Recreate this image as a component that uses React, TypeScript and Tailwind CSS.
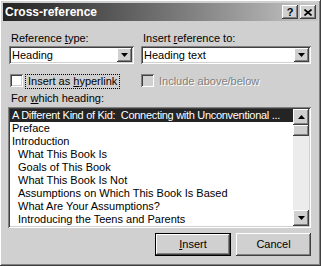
import React from 'react';

const raised =
  'shadow-[inset_-1px_-1px_#404040,inset_1px_1px_#ffffff,inset_-2px_-2px_#808080,inset_2px_2px_#d0d0d0]';
const sunken =
  'shadow-[inset_1px_1px_#808080,inset_-1px_-1px_#ffffff,inset_2px_2px_#404040,inset_-2px_-2px_#d0d0d0]';

const DownArrow = () => (
  <svg width="7" height="4" viewBox="0 0 7 4">
    <path d="M0 0h7L3.5 4z" fill="#000" />
  </svg>
);

const UpArrow = () => (
  <svg width="7" height="4" viewBox="0 0 7 4">
    <path d="M0 4h7L3.5 0z" fill="#000" />
  </svg>
);

const Combo = ({ value, width }: { value: string; width: string }) => (
  <div className={`${width} h-[18px] bg-white ${sunken} flex items-center pl-[3px] pr-[2px]`}>
    <span className="flex-1 leading-[13px]">{value}</span>
    <div className={`w-[15px] h-[14px] bg-[#d0d0d0] ${raised} flex items-center justify-center`}>
      <DownArrow />
    </div>
  </div>
);

const headings: { text: string; level: number }[] = [
  { text: 'A Different Kind of Kid:  Connecting with Unconventional ...', level: 0 },
  { text: 'Preface', level: 0 },
  { text: 'Introduction', level: 0 },
  { text: 'What This Book Is', level: 1 },
  { text: 'Goals of This Book', level: 1 },
  { text: 'What This Book Is Not', level: 1 },
  { text: 'Assumptions on Which This Book Is Based', level: 1 },
  { text: 'What Are Your Assumptions?', level: 1 },
  { text: 'Introducing the Teens and Parents', level: 1 },
];

export default function App() {
  return (
    <div
      className={`w-[321px] h-[266px] bg-[#d0d0d0] p-[3px] flex flex-col text-[11px] text-black ${raised}`}
      style={{ fontFamily: '"Liberation Sans", Arial, sans-serif' }}
    >
      {/* title bar */}
      <div className="h-[18px] bg-gradient-to-r from-[#242424] to-[#c8c8c8] flex items-center pl-[2px] pr-[2px]">
        <span className="flex-1 text-white font-bold text-[12px] leading-[14px]">Cross-reference</span>
        <div className="flex gap-[2px]">
          <div className={`w-[16px] h-[14px] bg-[#d0d0d0] ${raised} flex items-center justify-center font-bold text-[11px] leading-none`}>
            ?
          </div>
          <div className={`w-[16px] h-[14px] bg-[#d0d0d0] ${raised} flex items-center justify-center`}>
            <svg width="8" height="7" viewBox="0 0 8 7">
              <path d="M0.5 0.5l7 6M7.5 0.5l-7 6" stroke="#000" strokeWidth="1.6" />
            </svg>
          </div>
        </div>
      </div>

      <div className="flex-1 flex flex-col pl-[6px] pr-[7px]">
        {/* combos */}
        <div className="flex gap-[7px] mt-[11px]">
          <div className="flex flex-col w-[125px]">
            <span className="leading-[13px] pl-[2px]">
              Reference <span className="underline">t</span>ype:
            </span>
            <div className="mt-[1px]">
              <Combo value="Heading" width="w-[125px]" />
            </div>
          </div>
          <div className="flex flex-col flex-1">
            <span className="leading-[13px] pl-[2px]">
              Insert <span className="underline">r</span>eference to:
            </span>
            <div className="mt-[1px]">
              <Combo value="Heading text" width="w-full" />
            </div>
          </div>
        </div>

        {/* checkboxes */}
        <div className="flex gap-[7px] mt-[10px] h-[15px]">
          <div className="w-[125px] flex items-start pl-[1px]">
            <div className={`w-[13px] h-[13px] bg-white ${sunken}`} />
            <span className="ml-[2px] border border-dotted border-black px-[2px] leading-[13px]">
              Insert as <span className="underline">h</span>yperlink
            </span>
          </div>
          <div className="flex-1 flex items-start">
            <div className={`w-[13px] h-[13px] bg-[#d0d0d0] ${sunken}`} />
            <span className="ml-[5px] mt-[1px] leading-[13px] text-[#808080] [text-shadow:1px_1px_#ffffff]">
              Include above/below
            </span>
          </div>
        </div>

        {/* list */}
        <span className="leading-[13px] mt-[3px] pl-[2px]">
          For <span className="underline">w</span>hich heading:
        </span>
        <div className={`mt-[2px] -ml-[1px] h-[121px] bg-white ${sunken} p-[2px] flex`}>
          <div className="flex-1 flex flex-col overflow-hidden">
            {headings.map((h, i) => (
              <div
                key={i}
                className={`h-[13px] leading-[13px] whitespace-pre overflow-hidden ${
                  h.level === 1 ? 'pl-[8px]' : 'pl-[2px]'
                } ${i === 0 ? 'bg-[#242424] text-white tracking-[-0.3px]' : ''}`}
              >
                {h.text}
              </div>
            ))}
          </div>
          <div className="w-[16px] flex flex-col bg-[#ececec]">
            <div className={`h-[16px] bg-[#d0d0d0] ${raised} flex items-center justify-center`}>
              <UpArrow />
            </div>
            <div className={`h-[11px] bg-[#d0d0d0] ${raised}`} />
            <div className="flex-1" />
            <div className={`h-[16px] bg-[#d0d0d0] ${raised} flex items-center justify-center`}>
              <DownArrow />
            </div>
          </div>
        </div>

        {/* buttons */}
        <div className="flex justify-end gap-[5px] mt-[5px]">
          <div className="w-[76px] h-[23px] border border-black">
            <div className={`w-full h-full bg-[#d0d0d0] ${raised} flex items-center justify-center leading-[13px]`}>
              <span>
                <span className="underline">I</span>nsert
              </span>
            </div>
          </div>
          <div className={`w-[75px] h-[23px] bg-[#d0d0d0] ${raised} flex items-center justify-center leading-[13px]`}>
            Cancel
          </div>
        </div>
      </div>
    </div>
  );
}
